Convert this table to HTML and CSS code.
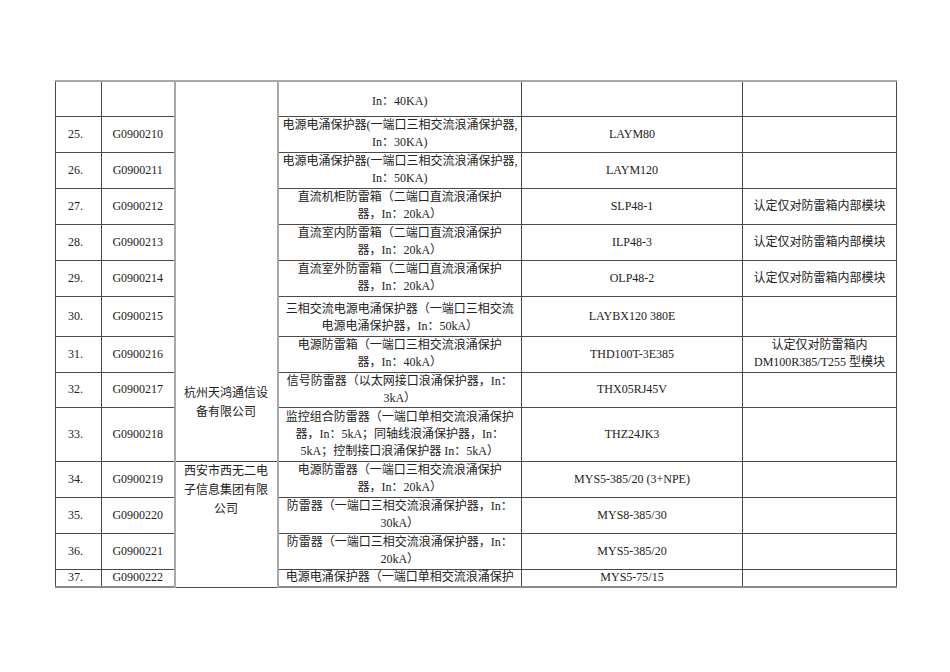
FILE: index.html
```html
<!DOCTYPE html>
<html lang="zh-CN">
<head>
<meta charset="utf-8">
<title>认定产品目录</title>
<link rel="stylesheet" href="styles.css">
</head>
<body>
<div class="page">
<table class="list">
<colgroup>
<col class="c-no"><col class="c-code"><col class="c-co"><col class="c-name"><col class="c-model"><col class="c-note">
</colgroup>
<tbody>
<tr class="r0">
<td class="no"></td><td class="code"></td>
<td class="co co1" rowspan="10"><div class="co1-text">杭州天鸿通信设<br>备有限公司</div></td>
<td class="name pt6">In：40KA)</td><td class="model"></td><td class="note"></td>
</tr>
<tr><td class="no">25.</td><td class="code">G0900210</td><td class="name">电源电涌保护器(一端口三相交流浪涌保护器,<br>In：30KA)</td><td class="model">LAYM80</td><td class="note"></td></tr>
<tr><td class="no">26.</td><td class="code">G0900211</td><td class="name">电源电涌保护器(一端口三相交流浪涌保护器,<br>In：50KA)</td><td class="model">LAYM120</td><td class="note"></td></tr>
<tr><td class="no">27.</td><td class="code">G0900212</td><td class="name">直流机柜防雷箱（二端口直流浪涌保护<br>器，In：20kA）</td><td class="model">SLP48-1</td><td class="note">认定仅对防雷箱内部模块</td></tr>
<tr><td class="no">28.</td><td class="code">G0900213</td><td class="name">直流室内防雷箱（二端口直流浪涌保护<br>器，In：20kA）</td><td class="model">ILP48-3</td><td class="note">认定仅对防雷箱内部模块</td></tr>
<tr><td class="no">29.</td><td class="code">G0900214</td><td class="name">直流室外防雷箱（二端口直流浪涌保护<br>器，In：20kA）</td><td class="model">OLP48-2</td><td class="note">认定仅对防雷箱内部模块</td></tr>
<tr class="r30"><td class="no">30.</td><td class="code">G0900215</td><td class="name pt4">三相交流电源电涌保护器（一端口三相交流<br>电源电涌保护器，In：50kA）</td><td class="model">LAYBX120 380E</td><td class="note"></td></tr>
<tr><td class="no">31.</td><td class="code">G0900216</td><td class="name">电源防雷箱（一端口三相交流浪涌保护<br>器，In：40kA）</td><td class="model">THD100T-3E385</td><td class="note">认定仅对防雷箱内<br>DM100R385/T255 型模块</td></tr>
<tr class="r32"><td class="no">32.</td><td class="code">G0900217</td><td class="name">信号防雷器（以太网接口浪涌保护器，In：<br>3kA）</td><td class="model">THX05RJ45V</td><td class="note"></td></tr>
<tr class="r33"><td class="no">33.</td><td class="code">G0900218</td><td class="name">监控组合防雷器（一端口单相交流浪涌保护<br>器，In：5kA；同轴线浪涌保护器，In：<br>5kA；控制接口浪涌保护器 In：5kA）</td><td class="model">THZ24JK3</td><td class="note"></td></tr>
<tr><td class="no">34.</td><td class="code">G0900219</td>
<td class="co co2" rowspan="4">西安市西无二电<br>子信息集团有限<br>公司</td>
<td class="name">电源防雷器（一端口三相交流浪涌保护<br>器，In：20kA）</td><td class="model">MYS5-385/20 (3+NPE)</td><td class="note"></td></tr>
<tr><td class="no">35.</td><td class="code">G0900220</td><td class="name">防雷器（一端口三相交流浪涌保护器，In：<br>30kA）</td><td class="model">MYS8-385/30</td><td class="note"></td></tr>
<tr><td class="no">36.</td><td class="code">G0900221</td><td class="name">防雷器（一端口三相交流浪涌保护器，In：<br>20kA）</td><td class="model">MYS5-385/20</td><td class="note"></td></tr>
<tr class="r37"><td class="no">37.</td><td class="code">G0900222</td><td class="name">电源电涌保护器（一端口单相交流浪涌保护</td><td class="model">MYS5-75/15</td><td class="note"></td></tr>
</tbody>
</table>
</div>
</body>
</html>
```
FILE: styles.css
```css
html, body {
  margin: 0;
  padding: 0;
  background: #ffffff;
}

.page {
  width: 950px;
  height: 672px;
  box-sizing: border-box;
  padding: 80px 0 0 55px;
  font-family: "Liberation Serif", "Noto Sans CJK SC", serif;
  font-size: 12px;
  line-height: 17px;
  color: #222222;
}

.list {
  border-collapse: collapse;
  table-layout: fixed;
  width: 841px;
}

.c-no { width: 46px; }
.c-code { width: 73px; }
.c-co { width: 103px; }
.c-name { width: 244px; }
.c-model { width: 221px; }
.c-note { width: 154px; }

.list tr { height: 36px; }
.list tr.r0 { height: 35px; }
.list tr.r30 { height: 40px; }
.list tr.r32 { height: 35px; }
.list tr.r33 { height: 54px; }
.list tr.r37 { height: 18px; }

.list td {
  border: 1px solid #4a4a4a;
  padding: 0 4px;
  vertical-align: middle;
  text-align: center;
  white-space: nowrap;
  overflow: hidden;
}

.list tr.r0 td { border-top: 2px solid #a8a8a8; }
.list tr.r37 td { border-bottom: 2px solid #8a8a8a; line-height: 15px; }

.list td.no {
  text-align: left;
  padding-left: 12px;
}

.list td.co {
  vertical-align: top;
  border-left: 2px solid #a8a8a8;
  border-right: 2px solid #a8a8a8;
  line-height: 19px;
  padding: 0 4px;
}

.co1-text {
  margin-top: 302px;
}

.list td.pt6 { padding-top: 6px; }
.list td.pt4 { padding-top: 4px; }
```
